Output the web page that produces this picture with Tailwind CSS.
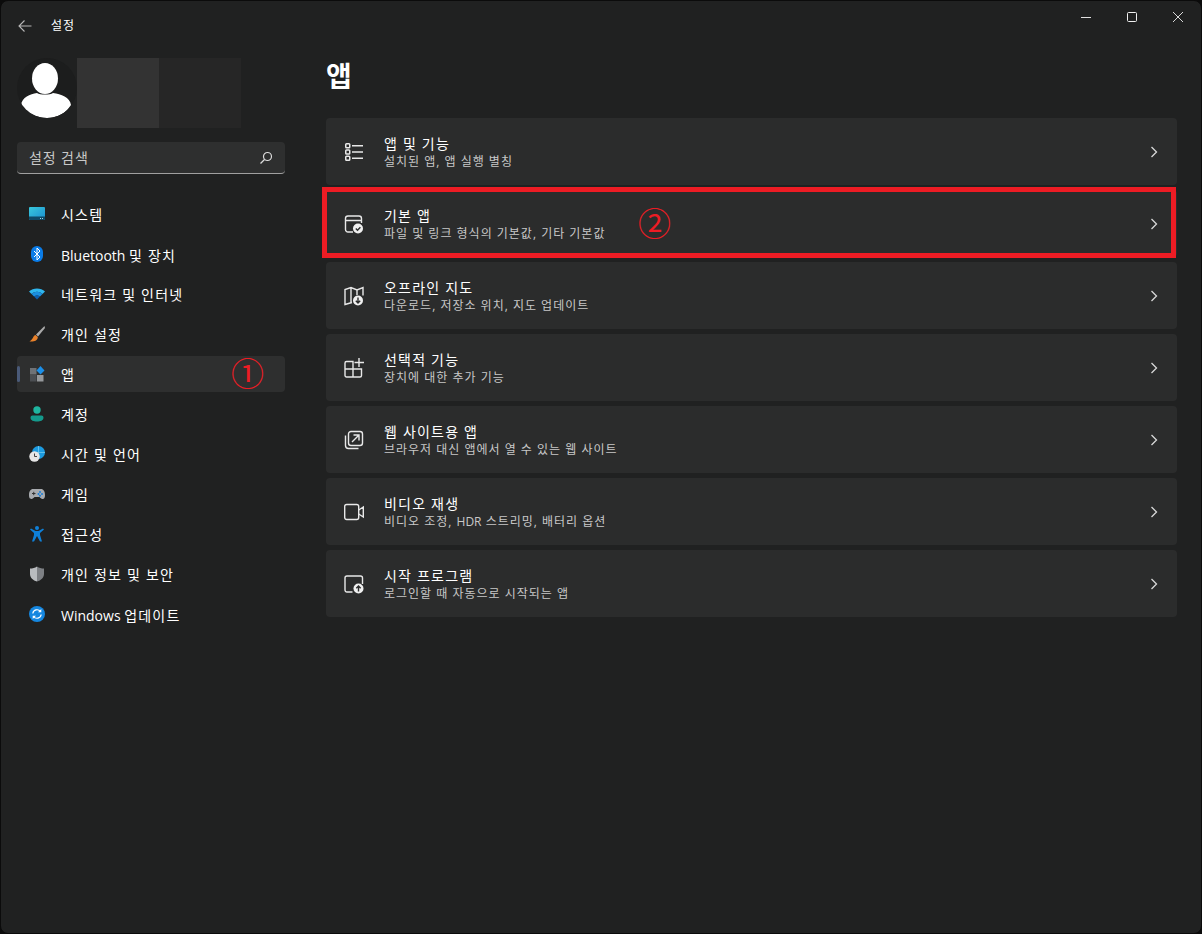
<!DOCTYPE html>
<html lang="ko">
<head>
<meta charset="utf-8">
<script src="https://cdn.jsdelivr.net/npm/@tailwindcss/browser@4"></script>
<title>설정</title>
</head>
<body class="bg-[#0b0b0b] font-['Open_Sans','Noto_Sans_CJK_KR',sans-serif] text-white">
<div class="relative w-[1202px] h-[934px] overflow-hidden rounded-lg border border-[#0b0b0b] bg-[#202121] flex">
  <!-- Sidebar -->
  <aside class="w-[325px] shrink-0 flex flex-col pl-4">
    <div class="h-[57px] flex items-center pb-[8px] gap-[18px]">
      <svg class="w-4 h-4" viewBox="0 0 16 16" fill="none" stroke="#b5b5b5" stroke-width="1.100"><path d="M14.500 8H2M7.500 2.500 2 8l5.500 5.500"/></svg>
      <span class="text-xs tracking-[1px]">설정</span>
    </div>
    <div class="flex h-[70px]">
      <div class="w-[60px] h-[60px] rounded-full bg-[#1c1d1d] overflow-hidden shrink-0">
        <svg viewBox="0 0 60 60" class="w-full h-full"><ellipse cx="28" cy="20.500" rx="13" ry="15.500" fill="#fff"/><path d="M4 47c1-8 9-11 16-12 3 2 13 2 16 0 8 1 17 4 18 12-5 8-14 13-24 13S9 55 4 47Z" fill="#fff"/></svg>
      </div>
      <div class="w-[82px] bg-[#333333]"></div>
      <div class="w-[82px] bg-[#262626]"></div>
    </div>
    <div class="mt-[14px] w-[268px] h-[32px] rounded bg-[#2e2f2f] border-b border-[#a0a0a0] flex items-center justify-between pl-3 pr-[12px]">
      <span class="text-sm tracking-[.9px] text-[#c8c8c8]">설정 검색</span>
      <svg class="w-[14px] h-[14px]" viewBox="0 0 14 14" fill="none" stroke="#dcdcdc" stroke-width="1.200"><circle cx="8.500" cy="5.500" r="4"/><path d="M5.500 8.500 1.500 12.500"/></svg>
    </div>
    <nav class="mt-[22px] w-[268px] flex flex-col gap-1 text-sm">
      <a class="h-9 flex items-center gap-4 px-3">
        <svg class="w-4 h-4" viewBox="0 0 16 16"><defs><linearGradient id="sys" x1="0" y1="0" x2="1" y2="1"><stop offset="0" stop-color="#39c8dc"/><stop offset="1" stop-color="#1a8fd0"/></linearGradient></defs><rect x="0" y="1" width="16" height="13" rx="1" fill="url(#sys)"/><path d="M0 10.500h16V13a1 1 0 0 1-1 1H1a1 1 0 0 1-1-1Z" fill="#0f4a66"/><path d="M11 12h1v1h-1zM13 12h1v1h-1z" fill="#9fd6ea"/></svg>
        <span class="mt-[2px] tracking-[1.200px]">시스템</span>
      </a>
      <a class="h-9 flex items-center gap-4 px-3">
        <svg class="w-4 h-4" viewBox="0 0 16 16"><rect x="2" y="0" width="12" height="16" rx="6" fill="#0a7ce8"/><path d="m5 5 6 6-3 3V2l3 3-6 6" fill="none" stroke="#fff" stroke-width="1"/></svg>
        <span class="mt-[4px]">Bluetooth <span class="tracking-[1.200px]">및 장치</span></span>
      </a>
      <a class="h-9 flex items-center gap-4 px-3">
        <svg class="w-4 h-4" viewBox="0 0 16 16"><path d="M0 5.500C4 1.500 12 1.500 16 5.500L13.500 8C10 5 6 5 2.500 8Z" fill="#2fb6ee"/><path d="M2.500 8C6 5 10 5 13.500 8L11 10.500C9 9 7 9 5 10.500Z" fill="#1a8fe0"/><path d="M5 10.500C7 9 9 9 11 10.500L8 13.500Z" fill="#0c5fb0"/></svg>
        <span class="mt-[2px] tracking-[1.200px]">네트워크 및 인터넷</span>
      </a>
      <a class="h-9 flex items-center gap-4 px-3">
        <svg class="w-4 h-4" viewBox="0 0 16 16"><path d="M15.500 0 7 8.500 9 10.500 16 2Z" fill="#a9a9a9"/><path d="M6.500 9C4 9.500 4.500 13 0.500 15.500 5 16 9 14.500 8.800 11Z" fill="#e8812a"/></svg>
        <span class="mt-[2px] tracking-[1.200px]">개인 설정</span>
      </a>
      <a class="relative h-9 flex items-center gap-4 px-3 bg-[#2e2f2f] rounded">
        <span class="absolute left-0 top-[10px] w-[3px] h-4 rounded-full bg-[#4a5a78]"></span>
        <svg class="w-4 h-4" viewBox="0 0 16 16"><rect x="1" y="2" width="6.500" height="6.500" fill="#6f7276"/><rect x="1" y="9" width="6.500" height="6.500" fill="#4b4e52"/><rect x="8" y="9" width="6.500" height="6.500" fill="#96999c"/><path d="M11.500 0 15.500 4.500 11.500 8.500 7.500 4.500Z" fill="#1b8fe8"/></svg>
        <span class="mt-[2px] tracking-[1.200px]">앱</span>
        <span class="absolute left-[214px] top-[-4px] text-[33px] leading-[40px] text-[#ed1c24] font-['Noto_Sans_CJK_KR']">①</span>
      </a>
      <a class="h-9 flex items-center gap-4 px-3">
        <svg class="w-4 h-4" viewBox="0 0 16 16"><circle cx="8" cy="4" r="3.700" fill="#1fb5a0"/><path d="M1.500 11.500a2 2 0 0 1 2-2h9a2 2 0 0 1 2 2c0 3-3 4-6.500 4s-6.500-1-6.500-4Z" fill="#149a8c"/></svg>
        <span class="mt-[2px] tracking-[1.200px]">계정</span>
      </a>
      <a class="h-9 flex items-center gap-4 px-3">
        <svg class="w-4 h-4" viewBox="0 0 16 16"><circle cx="9.500" cy="6.500" r="6.500" fill="#1c9be0"/><path d="M9.500 0v13M3 6.500h13" stroke="#7fd0ef" stroke-width=".7"/><circle cx="5.500" cy="10.500" r="5.200" fill="#e6e6e6"/><path d="M5.500 7.500v3h2.500" fill="none" stroke="#444" stroke-width="1"/></svg>
        <span class="mt-[2px] tracking-[1.200px]">시간 및 언어</span>
      </a>
      <a class="h-9 flex items-center gap-4 px-3">
        <svg class="w-4 h-4" viewBox="0 0 16 16"><path d="M4 3h8c2.500 0 4 2.500 4 6s-1.200 4-2.500 4-2-1.200-3-2H5.500c-1 .8-1.700 2-3 2S0 12.500 0 9s1.500-6 4-6Z" fill="#a8abaf"/><path d="M3 7.500h3.500M4.750 5.800v3.400" stroke="#333" stroke-width="1"/><circle cx="11" cy="6" r="1" fill="#1b7fd8"/><circle cx="13" cy="8" r="1" fill="#1b7fd8"/><circle cx="9.500" cy="8" r="1" fill="#1b7fd8"/><circle cx="11" cy="9.800" r="1" fill="#1b7fd8"/></svg>
        <span class="mt-[2px] tracking-[1.200px]">게임</span>
      </a>
      <a class="h-9 flex items-center gap-4 px-3">
        <svg class="w-4 h-4" viewBox="0 0 16 16"><circle cx="8" cy="2" r="2" fill="#0f80d8"/><path d="M1 3.500 2 2.500 6.500 5h3L14 2.500l1 1L11 7v2l2 6.500h-2L8 10l-3 5.500H3l2-6.500V7Z" fill="#0f80d8"/></svg>
        <span class="mt-[2px] tracking-[1.200px]">접근성</span>
      </a>
      <a class="h-9 flex items-center gap-4 px-3">
        <svg class="w-4 h-4" viewBox="0 0 16 16"><path d="M8 .5C10 2 12.500 2.500 15 2.500V8c0 3.500-3 6.500-7 7.500V.5Z" fill="#7d8084"/><path d="M8 .5C6 2 3.500 2.500 1 2.500V8c0 3.500 3 6.500 7 7.500Z" fill="#b9bcbf"/></svg>
        <span class="mt-[2px] tracking-[1.200px]">개인 정보 및 보안</span>
      </a>
      <a class="h-9 flex items-center gap-4 px-3">
        <svg class="w-4 h-4" viewBox="0 0 16 16"><circle cx="8" cy="8" r="8" fill="#1587e0"/><path d="M3.800 7.500A4.300 4.300 0 0 1 11.500 5.500M12.200 8.500A4.300 4.300 0 0 1 4.500 10.500" fill="none" stroke="#fff" stroke-width="1.200"/><path d="M12.300 3v3.300H9ZM3.700 13V9.700H7Z" fill="#fff"/></svg>
        <span class="mt-[4px]">Windows <span class="tracking-[1.200px]">업데이트</span></span>
      </a>
    </nav>
  </aside>
  <!-- Main -->
  <main class="flex-1 flex flex-col pr-[24px]">
    <div class="h-[32px] flex items-center justify-end">
      <svg class="w-[10px] h-[10px] mr-[36px]" viewBox="0 0 10 10"><path d="M0 5.500h10" stroke="#e0e0e0"/></svg>
      <svg class="w-[10px] h-[10px] mr-[36px]" viewBox="0 0 10 10"><rect x=".5" y=".5" width="9" height="9" rx="1" fill="none" stroke="#f0f0f0"/></svg>
      <svg class="w-[10px] h-[10px] mr-[-6px]" viewBox="0 0 10 10"><path d="m0 0 10 10M10 0 0 10" stroke="#d8d8d8"/></svg>
    </div>
    <h1 class="mt-[24px] h-[38px] leading-[38px] text-[28px] font-semibold">앱</h1>
    <div class="mt-[23px] flex flex-col gap-[5px]">
      <a class="h-[67px] rounded bg-[#2b2c2c] flex items-center pl-[18px] pr-[18px]">
        <svg class="w-5 h-5 shrink-0" viewBox="0 0 20 20" fill="none" stroke="#e8e8e8" stroke-width="1.500"><rect x="1.750" y="1.750" width="4" height="4" rx=".8"/><rect x="1.750" y="8" width="4" height="4" rx=".8"/><rect x="1.750" y="14.250" width="4" height="4" rx=".8"/><path d="M8 3.750h11M8 10h11M8 16.250h11"/></svg>
        <div class="ml-[20px] flex-1 flex flex-col"><span class="text-sm leading-[17px] tracking-[1.200px]">앱 및 기능</span><span class="mt-[2px] text-xs leading-[15px] tracking-[1px] text-[#c8c8c8]">설치된 앱, 앱 실행 별칭</span></div>
        <svg class="w-[9px] h-3" viewBox="0 0 9 12" fill="none" stroke="#d8d8d8" stroke-width="1.300"><path d="m1.500 1 5 5-5 5"/></svg>
      </a>
      <a class="h-[67px] rounded bg-[#2b2c2c] flex items-center pl-[18px] pr-[18px]">
        <svg class="w-5 h-5 shrink-0" viewBox="0 0 20 20" fill="none" stroke="#e8e8e8" stroke-width="1.400"><path d="M9 18H4a2.500 2.500 0 0 1-2.500-2.500v-11A2.500 2.500 0 0 1 4 2h11a2.500 2.500 0 0 1 2.500 2.500V9M1.500 6.500h16"/><circle cx="14" cy="14.500" r="5" fill="#f0f0f0" stroke="none"/><path d="m11.800 14.500 1.700 1.700 2.900-3" stroke="#2b2c2c"/></svg>
        <div class="ml-[20px] flex-1 flex flex-col"><span class="text-sm leading-[17px] tracking-[1.200px]">기본 앱</span><span class="mt-[2px] text-xs leading-[15px] tracking-[1px] text-[#c8c8c8]">파일 및 링크 형식의 기본값, 기타 기본값</span></div>
        <svg class="w-[9px] h-3" viewBox="0 0 9 12" fill="none" stroke="#d8d8d8" stroke-width="1.300"><path d="m1.500 1 5 5-5 5"/></svg>
      </a>
      <a class="h-[67px] rounded bg-[#2b2c2c] flex items-center pl-[18px] pr-[18px]">
        <svg class="w-5 h-5 shrink-0" viewBox="0 0 20 20" fill="none" stroke="#e8e8e8" stroke-width="1.400"><path d="M8 16.500 1 18.500V3.500L7 1.500l6 2.500 6-2.500v8M7 1.500v15M13 4v5"/><circle cx="14" cy="14.500" r="5" fill="#f0f0f0" stroke="none"/><path d="M14 11.500v5.500M11.800 14.800 14 17l2.200-2.200" stroke="#2b2c2c"/></svg>
        <div class="ml-[20px] flex-1 flex flex-col"><span class="text-sm leading-[17px] tracking-[1.200px]">오프라인 지도</span><span class="mt-[2px] text-xs leading-[15px] tracking-[1px] text-[#c8c8c8]">다운로드, 저장소 위치, 지도 업데이트</span></div>
        <svg class="w-[9px] h-3" viewBox="0 0 9 12" fill="none" stroke="#d8d8d8" stroke-width="1.300"><path d="m1.500 1 5 5-5 5"/></svg>
      </a>
      <a class="h-[67px] rounded bg-[#2b2c2c] flex items-center pl-[18px] pr-[18px]">
        <svg class="w-5 h-5 shrink-0" viewBox="0 0 20 20" fill="none" stroke="#e8e8e8" stroke-width="1.400"><path d="M2.500 3.500H9V19H2.500a1.500 1.500 0 0 1-1.500-1.500V5a1.500 1.500 0 0 1 1.500-1.500ZM1 11h16M9 11h8.500v6.500A1.500 1.500 0 0 1 16 19H9M15 0v9M10.500 4.500H20"/></svg>
        <div class="ml-[20px] flex-1 flex flex-col"><span class="text-sm leading-[17px] tracking-[1.200px]">선택적 기능</span><span class="mt-[2px] text-xs leading-[15px] tracking-[1px] text-[#c8c8c8]">장치에 대한 추가 기능</span></div>
        <svg class="w-[9px] h-3" viewBox="0 0 9 12" fill="none" stroke="#d8d8d8" stroke-width="1.300"><path d="m1.500 1 5 5-5 5"/></svg>
      </a>
      <a class="h-[67px] rounded bg-[#2b2c2c] flex items-center pl-[18px] pr-[18px]">
        <svg class="w-5 h-5 shrink-0" viewBox="0 0 20 20" fill="none" stroke="#e8e8e8" stroke-width="1.400"><rect x="4.500" y="1.500" width="14" height="14" rx="2.500"/><path d="M1.500 5.500v10a3 3 0 0 0 3 3h10M8 12l6.500-6.500M9.500 5h5.500v5.500"/></svg>
        <div class="ml-[20px] flex-1 flex flex-col"><span class="text-sm leading-[17px] tracking-[1.200px]">웹 사이트용 앱</span><span class="mt-[2px] text-xs leading-[15px] tracking-[1px] text-[#c8c8c8]">브라우저 대신 앱에서 열 수 있는 웹 사이트</span></div>
        <svg class="w-[9px] h-3" viewBox="0 0 9 12" fill="none" stroke="#d8d8d8" stroke-width="1.300"><path d="m1.500 1 5 5-5 5"/></svg>
      </a>
      <a class="h-[67px] rounded bg-[#2b2c2c] flex items-center pl-[18px] pr-[18px]">
        <svg class="w-5 h-5 shrink-0" viewBox="0 0 20 20" fill="none" stroke="#e8e8e8" stroke-width="1.400"><rect x=".7" y="2.500" width="14" height="15" rx="2"/><path d="m14.700 8 4.600-3v10l-4.600-3"/></svg>
        <div class="ml-[20px] flex-1 flex flex-col"><span class="text-sm leading-[17px] tracking-[1.200px]">비디오 재생</span><span class="mt-[2px] text-xs leading-[15px] tracking-[1px] text-[#c8c8c8]">비디오 조정, <span class="tracking-[0px]">HDR</span> 스트리밍, 배터리 옵션</span></div>
        <svg class="w-[9px] h-3" viewBox="0 0 9 12" fill="none" stroke="#d8d8d8" stroke-width="1.300"><path d="m1.500 1 5 5-5 5"/></svg>
      </a>
      <a class="h-[67px] rounded bg-[#2b2c2c] flex items-center pl-[18px] pr-[18px]">
        <svg class="w-5 h-5 shrink-0" viewBox="0 0 20 20" fill="none" stroke="#e8e8e8" stroke-width="1.400"><path d="M8.500 18H3a2 2 0 0 1-2-2V4a2 2 0 0 1 2-2h13.500a2 2 0 0 1 2 2v6"/><circle cx="14.500" cy="14.500" r="5" fill="#f0f0f0" stroke="none"/><path d="M14.500 17.500v-5.500M12.300 14.200l2.200-2.200 2.200 2.200" stroke="#2b2c2c"/></svg>
        <div class="ml-[20px] flex-1 flex flex-col"><span class="text-sm leading-[17px] tracking-[1.200px]">시작 프로그램</span><span class="mt-[2px] text-xs leading-[15px] tracking-[1px] text-[#c8c8c8]">로그인할 때 자동으로 시작되는 앱</span></div>
        <svg class="w-[9px] h-3" viewBox="0 0 9 12" fill="none" stroke="#d8d8d8" stroke-width="1.300"><path d="m1.500 1 5 5-5 5"/></svg>
      </a>
    </div>
  </main>
  <!-- Annotation -->
  <div class="absolute left-[321px] top-[186px] w-[854px] h-[71px] border-[5px] border-[#ed1c24] pointer-events-none"></div>
  <span class="absolute left-[637px] top-[201px] text-[33px] leading-[40px] text-[#ed1c24] font-['Noto_Sans_CJK_KR']">②</span>
</div>
</body>
</html>
